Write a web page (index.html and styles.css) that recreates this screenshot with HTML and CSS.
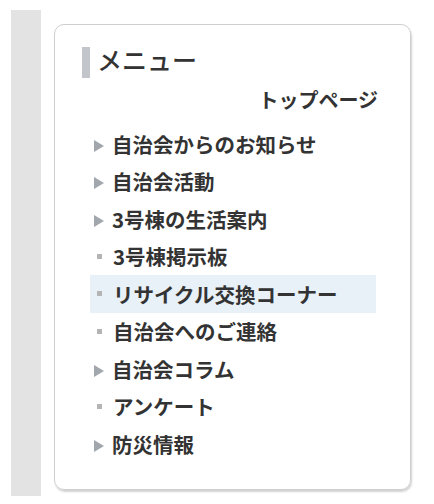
FILE: index.html
```html
<!DOCTYPE html>
<html lang="ja">
<head>
    <meta charset="UTF-8">
    <title>メニュー</title>
    <link rel="stylesheet" href="styles.css">
</head>
<body>
    <div class="page">
        <div class="side"></div>
        <div class="card">
            <h2 class="menu-title">メニュー</h2>
            <div class="top-link"><a href="#">トップページ</a></div>
            <ul class="menu">
                <li class="has-sub"><a href="#">自治会からのお知らせ</a></li>
                <li class="has-sub"><a href="#">自治会活動</a></li>
                <li class="has-sub"><a href="#">3号棟の生活案内</a></li>
                <li><a href="#">3号棟掲示板</a></li>
                <li class="current"><a href="#">リサイクル交換コーナー</a></li>
                <li><a href="#">自治会へのご連絡</a></li>
                <li class="has-sub"><a href="#">自治会コラム</a></li>
                <li><a href="#">アンケート</a></li>
                <li class="has-sub"><a href="#">防災情報</a></li>
            </ul>
        </div>
    </div>
</body>
</html>
```

FILE: styles.css
```css
* {
    margin: 0;
    padding: 0;
    box-sizing: border-box;
}

body {
    background: #fff;
    color: #333;
    font-family: "Noto Sans CJK JP", "Noto Sans", sans-serif;
}

.page {
    display: flex;
    align-items: flex-start;
    padding: 10px 0 0 11px;
}

.side {
    width: 30px;
    height: 486px;
    background: #e3e3e3;
}

.card {
    width: 357px;
    height: 466px;
    margin: 14px 0 0 13px;
    border: 1px solid #cfcfcf;
    border-radius: 10px;
    box-shadow: 1px 2px 2px rgba(0,0,0,0.18);
    padding: 22px 32px 0 27px;
}

.menu-title {
    display: flex;
    align-items: flex-start;
    gap: 7px;
    font-size: 25px;
    font-weight: 500;
    line-height: 24px;
    color: #333;
}

.menu-title::before {
    content: "";
    width: 8px;
    height: 31px;
    background: #c2c5c9;
}

.top-link {
    text-align: right;
    margin-top: 10px;
    font-size: 20px;
    font-weight: 700;
    line-height: 24px;
}

.menu {
    list-style: none;
    margin: 13px 2px 0 8px;
}

.menu li {
    display: flex;
    align-items: center;
    height: 37.5px;
    padding-left: 4px;
}

.menu li::before {
    content: "";
    width: 5px;
    height: 5px;
    margin: 0 11px 0 3px;
    background: #b4b4b4;
}

.menu li.has-sub::before {
    width: 0;
    height: 0;
    margin: 4px 8px 0 0;
    background: none;
    border-top: 6.5px solid transparent;
    border-bottom: 6.5px solid transparent;
    border-left: 10px solid #a2a7ad;
}

.menu li.current {
    background: #e8f0f8;
}

a {
    color: #333;
    text-decoration: none;
}

.menu a {
    font-size: 20.5px;
    font-weight: 700;
    line-height: 24px;
}
```
